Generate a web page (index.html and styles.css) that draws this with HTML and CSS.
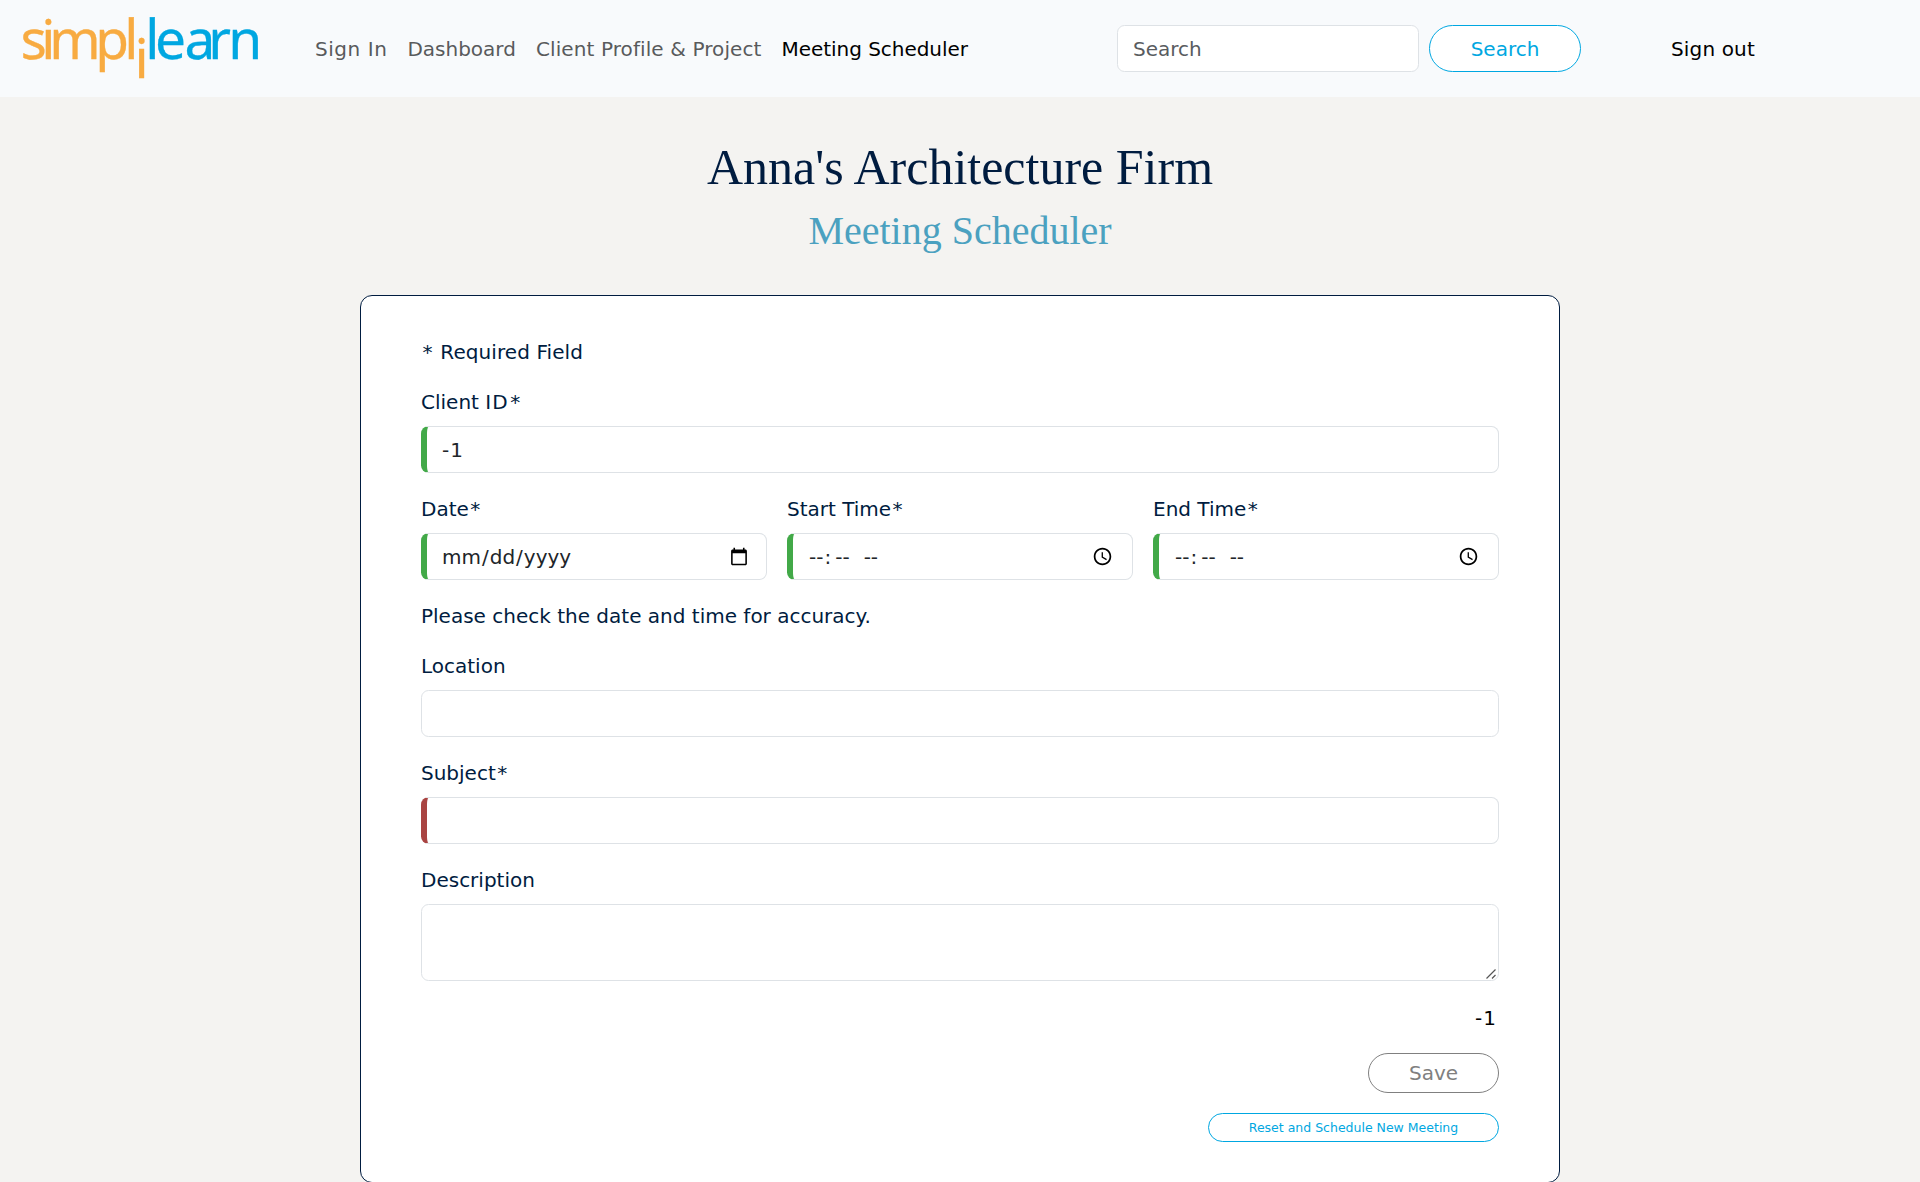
FILE: index.html
```html
<!DOCTYPE html>
<html lang="en">
<head>
<meta charset="utf-8">
<title>Meeting Scheduler</title>
<link rel="stylesheet" href="styles.css">
</head>
<body>
<header class="navbar">
  <a class="brand" aria-label="simplilearn">
    <svg class="logo" width="300" height="97" viewBox="0 0 300 97">
      <g class="logo-orange">
        <text x="20.5 41.3 49.3 95.3 124.3" y="59">simpl</text>
        <text x="134.6" y="78">i</text>
      </g>
      <text class="logo-blue" x="145.3 155 184.6 208.3 228.3" y="59">learn</text>
    </svg>
  </a>
  <nav class="links">
    <a class="wide">Sign In</a>
    <a>Dashboard</a>
    <a class="project">Client Profile &amp; Project</a>
    <a class="active">Meeting Scheduler</a>
  </nav>
  <form class="search">
    <input class="control" type="text" placeholder="Search">
    <button class="btn btn-search" type="button">Search</button>
  </form>
  <a class="signout">Sign out</a>
</header>
<main>
  <h1>Anna's Architecture Firm</h1>
  <h2>Meeting Scheduler</h2>
  <form class="card">
    <p class="required"><span class="star">*</span> Required Field</p>
    <label class="field"><span>Client <span class="id">ID</span><span class="star">*</span></span><input class="control valid number" type="text" value="-1"></label>
    <div class="row">
      <label class="field"><span>Date<span class="star">*</span></span><input class="control valid" type="date"></label>
      <label class="field"><span>Start Time<span class="star">*</span></span><input class="control valid time" type="time"></label>
      <label class="field"><span>End Time<span class="star">*</span></span><input class="control valid time" type="time"></label>
    </div>
    <p>Please check the date and time for accuracy.</p>
    <label class="field"><span>Location</span><input class="control" type="text"></label>
    <label class="field"><span>Subject<span class="star">*</span></span><input class="control invalid" type="text"></label>
    <label class="field description"><span>Description</span><textarea class="control" rows="2"></textarea>
      <svg class="grip" width="12" height="12" viewBox="0 0 12 12"><path d="M1.5 10.5 10.5 1.5M7 10.5 10.5 7"/></svg>
    </label>
    <div class="actions">
      <span class="status">-1</span>
      <button class="btn btn-save" type="button" disabled>Save</button>
      <button class="btn btn-reset" type="button">Reset and Schedule New Meeting</button>
    </div>
  </form>
</main>
</body>
</html>
```
FILE: styles.css
```css
* { box-sizing: border-box; }
html { overflow: hidden; }
body {
  margin: 0;
  background: #f4f3f1;
  color: #001c40;
  font: 20px/30px Verdana, "DejaVu Sans", sans-serif;
}
.navbar {
  display: flex;
  align-items: center;
  height: 97px;
  background: #f8fafc;
  color: #000;
}
.brand { height: 97px; width: 315px; }
.logo { display: block; font: 55px "Noto Sans", sans-serif; stroke-width: 0.3; }
.logo-orange { fill: #f8ab41; stroke: #f8ab41; }
.logo-blue { fill: #00a7e1; stroke: #00a7e1; }
.links { display: flex; gap: 20px; width: 802px; color: #595a5c; white-space: nowrap; }
.links .active { color: #000; letter-spacing: -0.04px; }
.links .wide { letter-spacing: 0.55px; }
.links .project { letter-spacing: 0.1px; }
.search { display: flex; gap: 10px; }
.search .control { width: 302px; }
.signout { margin-left: 90px; letter-spacing: 0.15px; }
.control {
  display: block;
  width: 100%;
  height: 47px;
  padding: 7.5px 15px;
  border: 1px solid #dee2e6;
  border-radius: 7.5px;
  background: #fff;
  color: #212529;
  font: inherit;
}
.control::placeholder { color: #595c5f; opacity: 1; }
textarea.control { height: 77px; resize: none; }
.valid { border-left: 6px solid #42a948; }
.invalid { border-left: 6px solid #a94442; }
.number { letter-spacing: 1px; }
.row .control { padding-left: 14px; }
.row .time { padding-right: 16px; }
.time::-webkit-datetime-edit-minute-field { margin-left: 3px; }
.time::-webkit-datetime-edit-ampm-field { margin-left: 8px; }
.time::-webkit-datetime-edit-hour-field { margin-left: 1px; }
.btn {
  padding: 0;
  border: 1px solid #00a7e1;
  border-radius: 24px;
  background: #fff;
  color: #00a7e1;
  font: inherit;
}
.btn-search { width: 152px; height: 47px; }
h1, h2 { margin: 0; font-family: "Liberation Serif", serif; font-weight: 400; text-align: center; }
h1 { padding-top: 40px; font-size: 50px; line-height: 60px; }
h2 { margin-top: 10px; font-size: 40px; line-height: 48px; color: #4ba1c0; }
.card {
  display: flex;
  flex-direction: column;
  gap: 20px;
  width: 1200px;
  height: 888px;
  margin: 40px auto 0;
  padding: 41px 60px 39px;
  border: 1px solid #001c40;
  border-radius: 12px;
  background: #fff;
}
p { margin: 0; }
.required { letter-spacing: 0.08px; }
.field { display: flex; flex-direction: column; gap: 9px; }
.card > .field:not(:last-child), .row { margin-bottom: 1px; }
.row { display: grid; grid-template-columns: repeat(3, 1fr); gap: 20px; }
.star { padding: 0 1.4px; }
.id { letter-spacing: 1.2px; }
.description { position: relative; }
.grip { position: absolute; right: 2px; bottom: 1px; fill: none; stroke: #555; stroke-width: 1.2; }
.actions { display: flex; flex-direction: column; align-items: flex-end; gap: 20px; }
.status { padding-right: 2px; letter-spacing: 1px; color: #000; transform: translateY(1px); }
.btn-save { width: 131px; height: 40px; margin-top: 1px; border-color: #808080; color: #808080; }
.btn-reset { width: 291px; height: 29px; font-size: 12.5px; line-height: 19px; }
```
